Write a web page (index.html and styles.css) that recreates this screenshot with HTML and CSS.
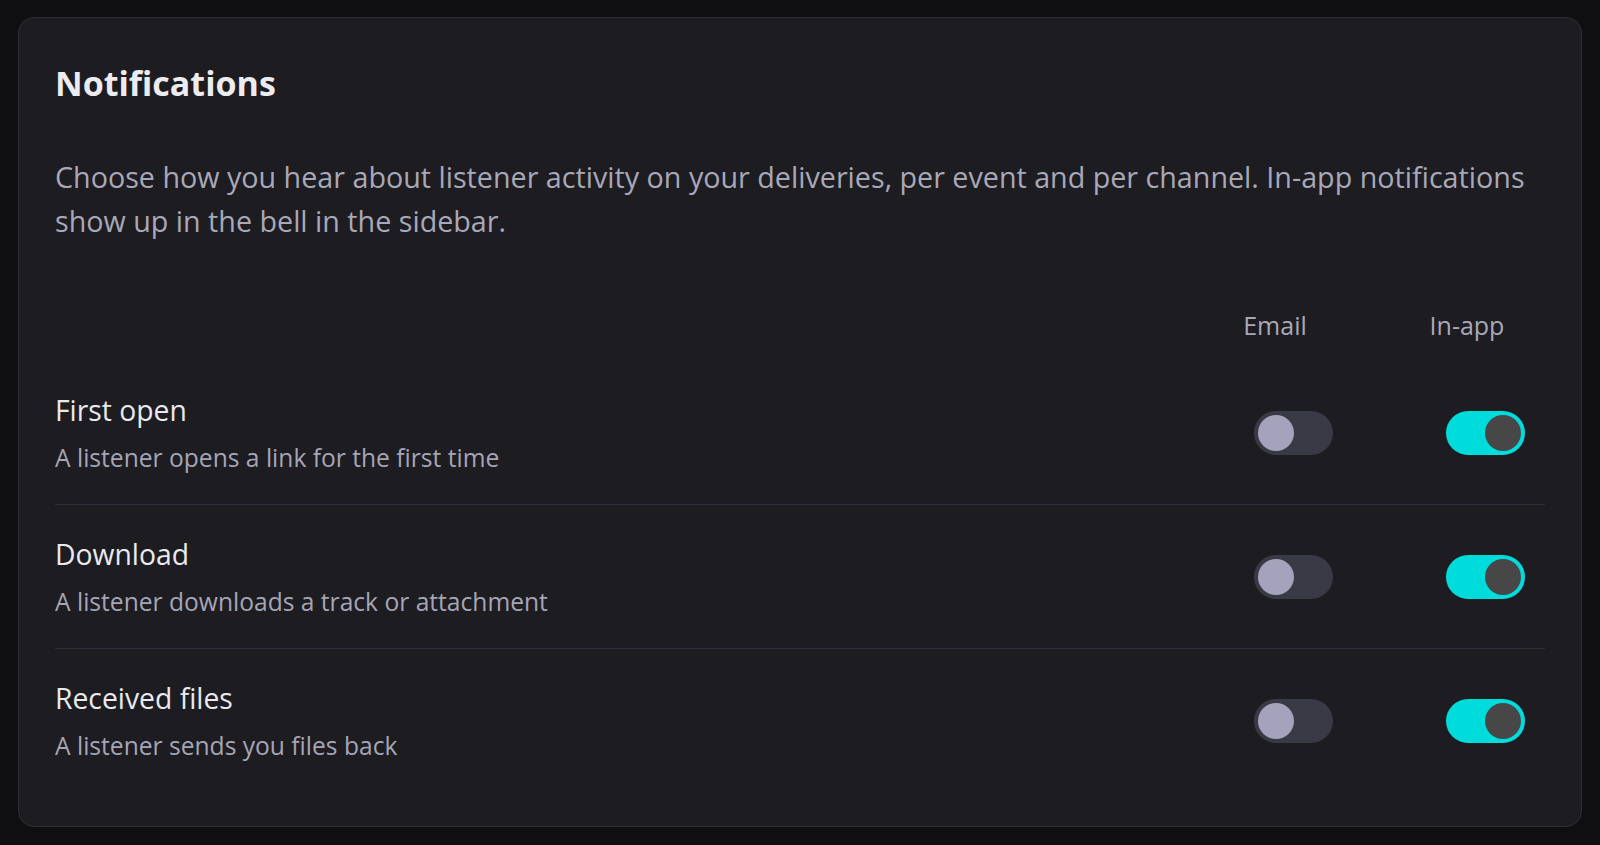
FILE: index.html
```html
<!DOCTYPE html>
<html lang="en">
<head>
<meta charset="utf-8">
<title>Notifications</title>
<link rel="stylesheet" href="styles.css">
</head>
<body>
<section class="card">
  <h1 class="title">Notifications</h1>
  <p class="intro">Choose how you hear about listener activity on your deliveries, per event and per channel. In-app notifications show up in the bell in the sidebar.</p>
  <div class="grid head">
    <div></div>
    <div class="col-label">Email</div>
    <div class="col-label">In-app</div>
  </div>
  <div class="grid row">
    <div class="info">
      <div class="row-title">First open</div>
      <div class="row-desc">A listener opens a link for the first time</div>
    </div>
    <div class="cell"><span class="toggle"><span class="knob"></span></span></div>
    <div class="cell"><span class="toggle on"><span class="knob"></span></span></div>
  </div>
  <div class="grid row">
    <div class="info">
      <div class="row-title">Download</div>
      <div class="row-desc">A listener downloads a track or attachment</div>
    </div>
    <div class="cell"><span class="toggle"><span class="knob"></span></span></div>
    <div class="cell"><span class="toggle on"><span class="knob"></span></span></div>
  </div>
  <div class="grid row">
    <div class="info">
      <div class="row-title">Received files</div>
      <div class="row-desc">A listener sends you files back</div>
    </div>
    <div class="cell"><span class="toggle"><span class="knob"></span></span></div>
    <div class="cell"><span class="toggle on"><span class="knob"></span></span></div>
  </div>
</section>
</body>
</html>
```
FILE: styles.css
```css
* { box-sizing: border-box; }
html, body { height: 100%; }
body {
  margin: 0;
  padding: 17px 18px;
  background: #0f0f12;
  font-family: "Open Sans", "Noto Sans", sans-serif;
  color: #e9e9ee;
}
.card {
  background: #1c1c21;
  border: 1px solid #2e2e37;
  border-radius: 16px;
  padding: 45px 36px 34px;
}
.title {
  margin: 0;
  font-size: 34px;
  line-height: 40px;
  font-weight: 700;
  color: #ececf0;
}
.intro {
  margin: 52px 0 0;
  font-size: 28.7px;
  line-height: 44px;
  color: #a9a8b8;
}
.grid {
  display: grid;
  grid-template-columns: 1fr 156px 156px;
  column-gap: 36px;
  align-items: center;
}
.head { margin-top: 66px; }
.col-label {
  text-align: center;
  font-size: 25px;
  line-height: 32px;
  color: #a9a8b8;
}
.head + .row { margin-top: 20px; }
.row {
  padding: 31px 0 31px;
}
.row + .row { border-top: 1px solid #2f2f3b; }
.row-title {
  font-size: 28.3px;
  line-height: 36px;
  color: #e9e9ee;
}
.row-desc {
  margin-top: 15px;
  font-size: 24.6px;
  line-height: 30px;
  color: #a6a5b6;
}
.cell {
  display: flex;
  justify-content: flex-end;
  padding-right: 20px;
}
.toggle {
  display: flex;
  align-items: center;
  width: 79px;
  height: 44px;
  padding: 4px;
  border-radius: 22px;
  background: #3a3a47;
}
.knob {
  width: 36px;
  height: 36px;
  border-radius: 50%;
  background: #a4a3bb;
}
.toggle.on {
  background: #00dcdc;
  justify-content: flex-end;
}
.toggle.on .knob {
  background: #474747;
}
```
